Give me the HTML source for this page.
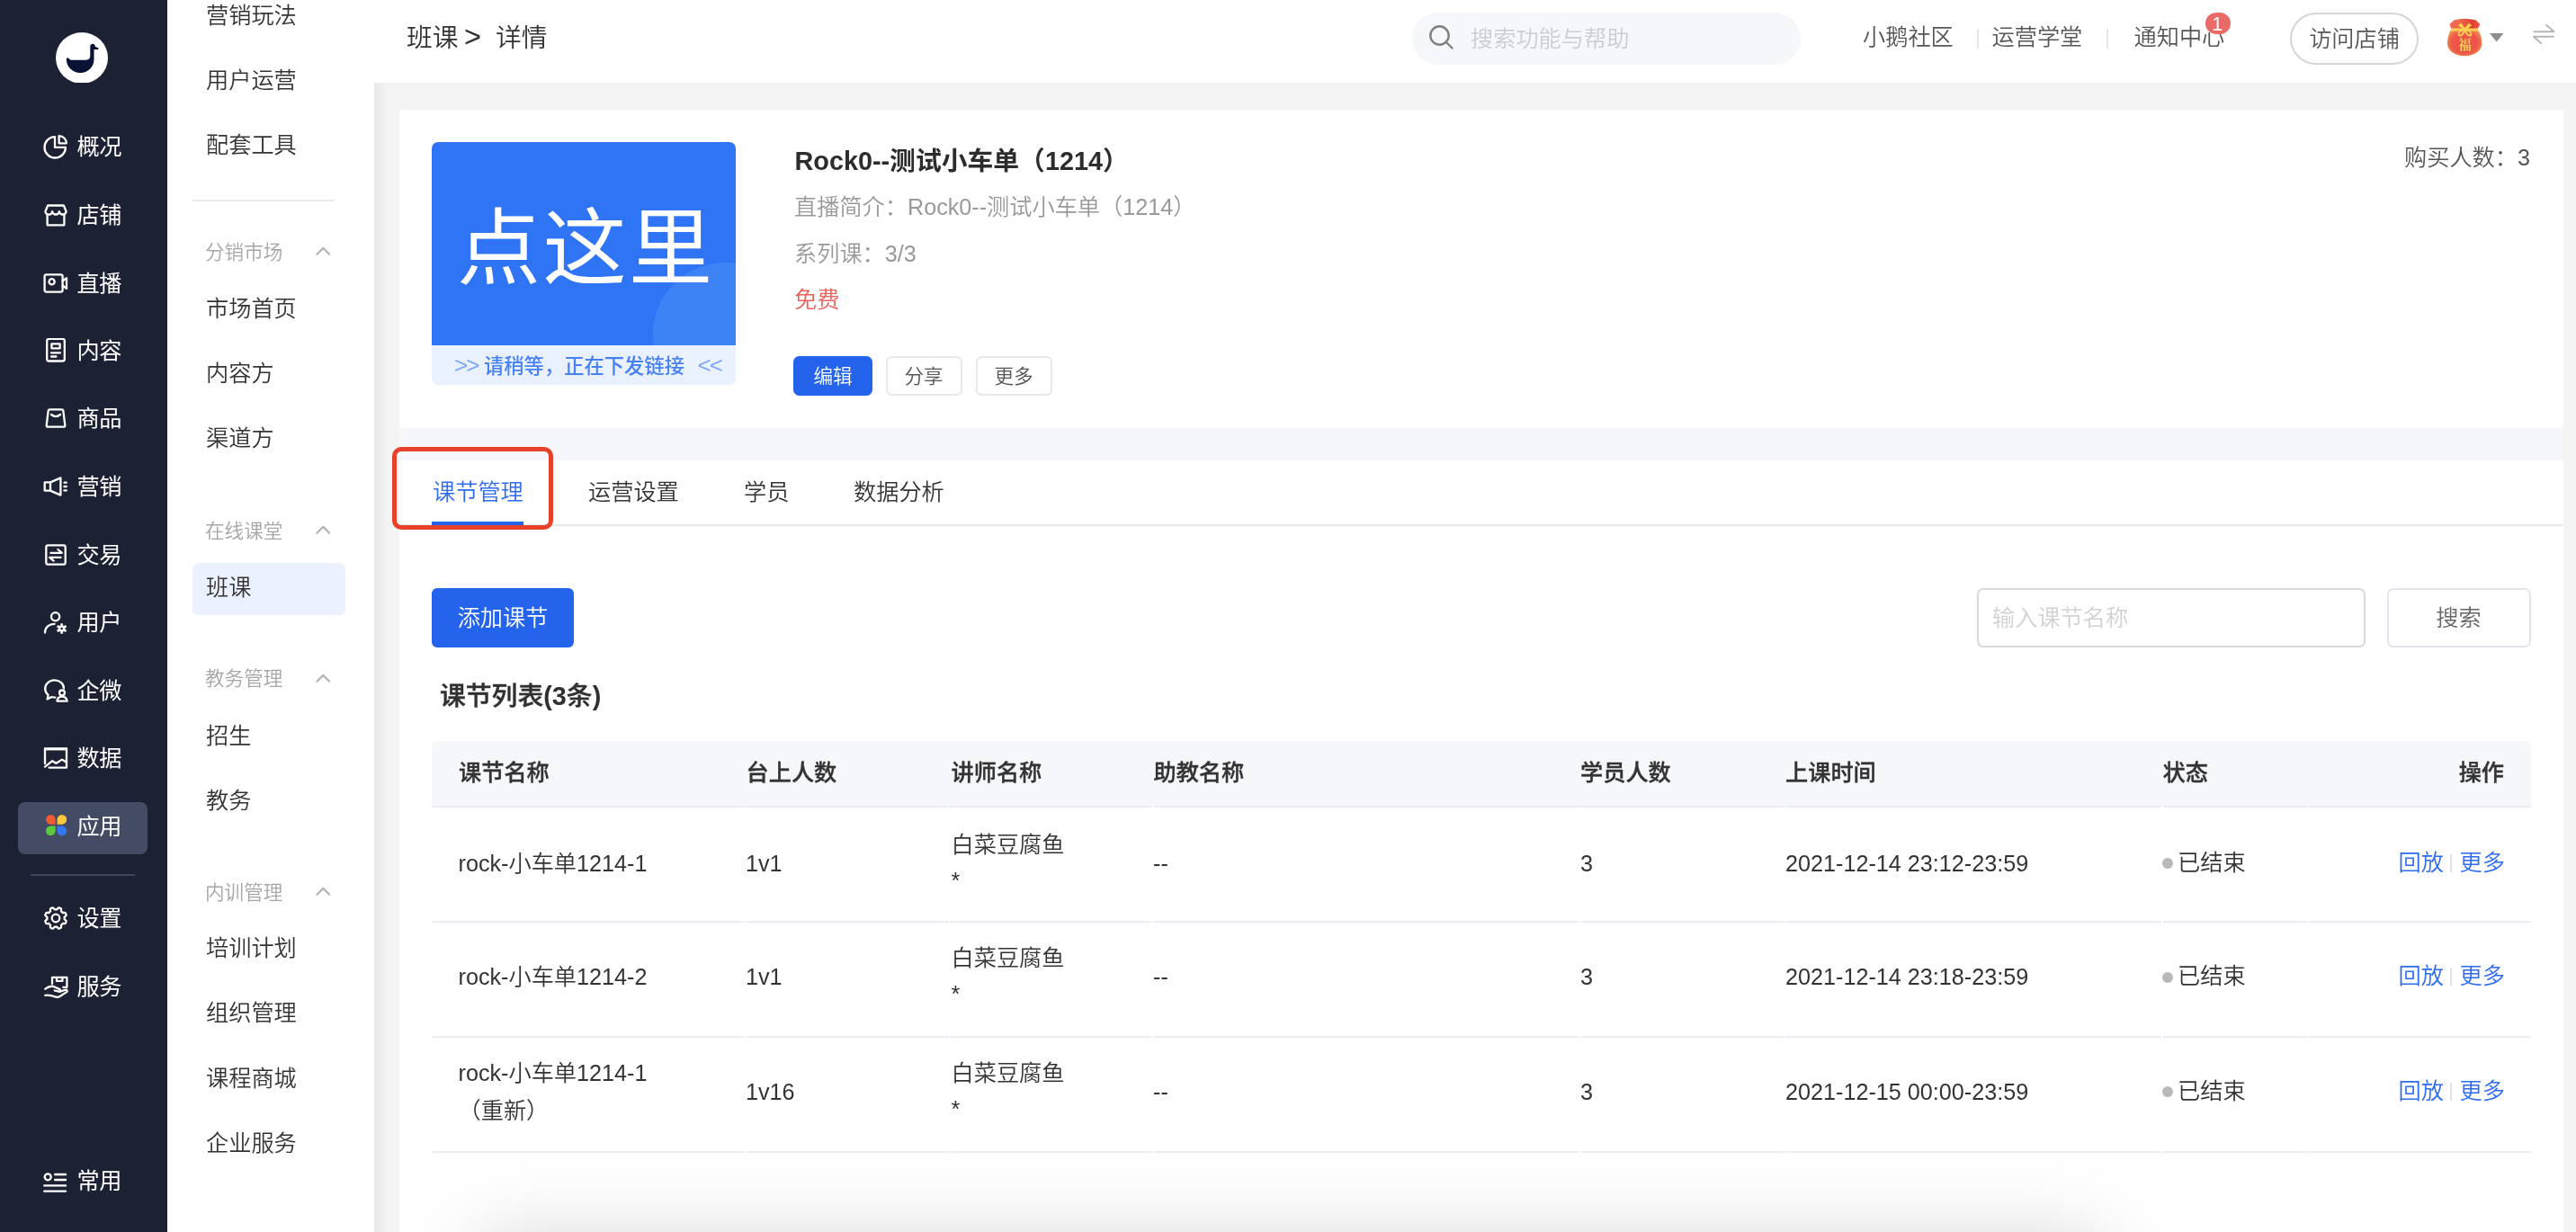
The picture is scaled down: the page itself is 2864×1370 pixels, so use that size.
<!DOCTYPE html>
<html lang="zh-CN">
<head>
<meta charset="utf-8">
<title>班课 - 详情</title>
<style>
*{box-sizing:border-box;margin:0;padding:0}
html,body{width:2864px;height:1370px;overflow:hidden;background:#f4f4f4}
body{position:relative;font-family:"Liberation Sans","Noto Sans CJK SC",sans-serif;font-size:25.2px;font-weight:350;color:#333;-webkit-font-smoothing:antialiased}
#nav,#sub,#hd,#main{will-change:transform}
.abs,.t{position:absolute;white-space:nowrap}
.t{height:40px;line-height:40px;margin-top:-20px}
/* left dark sidebar */
#nav{position:absolute;left:0;top:0;width:186px;height:1370px;background:#1c2133}
#nav .t{color:#fff;left:85.5px;font-size:25.2px;font-weight:400;letter-spacing:-0.4px}
#nav svg{position:absolute;left:48px;width:28px;height:28px;margin-top:-14px;fill:none;stroke:#fff;stroke-width:2.3;stroke-linecap:round;stroke-linejoin:round}
#nav .hl{position:absolute;left:20px;top:892px;width:144px;height:58px;border-radius:8px;background:#444b64}
#nav .dv{position:absolute;left:34px;top:971.5px;width:116px;height:2px;background:#3c4360}
/* second sidebar */
#sub{position:absolute;left:186px;top:0;width:230px;height:1370px;background:#fff}
#sub .t{left:43px;color:#333}
#sub .g{font-size:21.6px;color:#a6a6a6;margin-left:-1px;margin-top:-19px}
#sub .hl{position:absolute;left:28px;top:626px;width:170px;height:58px;border-radius:7px;background:#ebf1fe}
#sub .dv{position:absolute;left:28px;top:221.5px;width:158px;height:2px;background:#ebebeb}
#sub svg.ch{position:absolute;left:164.5px;width:16.6px;height:10.2px;margin-top:-5.6px;fill:none;stroke:#b4b4b4;stroke-width:2.4;stroke-linecap:round;stroke-linejoin:round}
/* header */
#hd{position:absolute;left:416px;top:0;width:2448px;height:92px;background:#fff}

#hd .t{color:#555}
#hd .bc{font-size:28.8px;color:#333;top:41.5px}
#hd .srch{position:absolute;left:1154px;top:14px;width:432px;height:58px;border-radius:29px;background:#f5f7fa}
#hd .sep{position:absolute;top:32px;width:2px;height:22px;background:#e6e6e6}
#hd .badge{position:absolute;left:2036px;top:13.8px;width:28px;height:24.4px;border-radius:12.2px;background:#e96a66;color:#fff;font-size:21.6px;font-weight:400;line-height:25px;text-align:center;text-indent:-1.5px}
#hd .visit{position:absolute;left:2130px;top:14px;width:143px;height:58px;border:2px solid #d6d6d6;border-radius:29px;text-align:center;line-height:54px;color:#555}
/* main */
#main{position:absolute;left:416px;top:92px;width:2448px;height:1278px;background:#f4f4f4;overflow:hidden}
#main .edge{position:absolute;left:0;top:0;width:16px;height:100%;background:linear-gradient(90deg,#e9e9e9,#f4f4f4)}
.card{position:absolute;background:#fff}

#c1{left:28px;top:30px;width:2406px;height:354px}
#c1 .thumb{position:absolute;left:36px;top:36px;width:338px;height:270px;border-radius:7px;overflow:hidden;background:#eaf1fe}
#c1 .thumb .blue{position:absolute;left:0;top:0;width:338px;height:225.8px;background:#3074f6;overflow:hidden}
#c1 .thumb .blue i{position:absolute;left:246px;top:134px;width:160px;height:160px;border-radius:50%;background:rgba(80,150,245,.45)}
#c1 .thumb .big{position:absolute;left:28px;top:119px;height:100px;line-height:100px;margin-top:-50px;font-size:93px;letter-spacing:2.5px;color:#fff;font-weight:400;white-space:nowrap}
#c1 .thumb .strip{position:absolute;left:0;top:226.5px;width:338px;height:43.5px;line-height:46px;font-size:22.3px;font-weight:500;color:#4682f6;white-space:nowrap}
#c1 .thumb .strip span{position:absolute;top:0}
.btn{position:absolute;height:44px;line-height:41.5px;border-radius:6.5px;text-align:center;font-size:21.6px;border:2px solid #e7e8ea;color:#555;background:#fff}
.btn.p{background:#2463ec;border-color:#2463ec;color:#fff}
#c2{left:28px;top:420px;width:2406px;height:900px}
#c2 .tab{font-size:25.2px;top:35px}
#tbl .th{position:absolute;top:0;height:73px;background:#f5f7fa}
#tbl .h{font-weight:500;-webkit-text-stroke:.35px #333;color:#333;top:34.8px}
#tbl .row{position:absolute;left:0;width:2333px;height:2px;background:#ebedf2;border-radius:1px}
#tbl .dot{position:absolute;left:1924px;width:12px;height:12px;border-radius:50%;background:#b9b9b9;margin-top:-5px}
#tbl .a{color:#2d6bf0}
#tbl .bar{position:absolute;left:2244px;width:1.5px;height:20px;margin-top:-10px;background:#dfe3ea}
#shadow{position:absolute;left:119px;top:1298px;width:1800px;height:200px;box-shadow:0 0 100px 0 rgba(0,0,0,.22)}
</style>
</head>
<body>
<div id="nav">
<svg style="left:62px;top:35.6px;width:58px;height:56.8px;margin:0;stroke:none" viewBox="0 0 58 58" preserveAspectRatio="none"><circle cx="29" cy="29" r="29" fill="#fff"/><path fill="#081235" transform="translate(0 .6)" d="M11.8 29.8c0-1.7 1.9-2.1 2.7-.9.8 1.3 2.2 1.9 3.7 1.9h15.6c2.8 0 4.5-1.7 4.5-4.5V15.2c0-3.4 4.5-3.8 5.3-.8.3 1.3 1.1 1.9 2.5 2 1.900.1 1.9 2.5 0 2.5h-3.6v11.3c0 8.4-6.9 15.1-15.4 15.1S11.8 38.5 11.8 29.8z"/></svg>
<div class="hl"></div><div class="dv"></div>
<svg style="top:163px" viewBox="0 0 28 28"><g transform="translate(0 .5)"><path d="M13 2.6A11.7 11.7 0 1 0 24.9 14.4H13z"/><path d="M17.6 1.6v8.2h8.2a8.2 8.2 0 0 0-8.2-8.2z"/></g></svg>
<div class="t" style="top:163px">概况</div>
<svg style="top:238.6px" viewBox="0 0 28 28"><g transform="translate(0 .5)"><path d="M2.4 9.6L5.2 3h17.6l2.8 6.6a3.87 3.6 0 0 1-7.73 0a3.87 3.6 0 0 1-7.73 0a3.87 3.6 0 0 1-7.74 0z"/><path d="M4.6 13v11.8h18.8V13"/></g></svg>
<div class="t" style="top:238.6px">店铺</div>
<svg style="top:314.6px" viewBox="0 0 28 28"><rect x="1.6" y="4.4" width="20" height="19.2" rx="2"/><circle cx="9.6" cy="12.2" r="3.1"/><path d="M21.6 11.5l4.4-3.4v11.8l-4.4-3.4"/></svg>
<div class="t" style="top:314.6px">直播</div>
<svg style="top:389.6px" viewBox="0 0 28 28"><g transform="translate(0 -.9)"><rect x="4.2" y="1.8" width="19.6" height="24.6" rx="2.2"/><rect x="9.4" y="7.2" width="9.2" height="5"/><path d="M9 17.2h10M9 21.4h5.4"/></g></svg>
<div class="t" style="top:389.6px">内容</div>
<svg style="top:465.2px" viewBox="0 0 28 28"><path d="M7.2 4.4h13.6q1.3 0 1.5 1.3l2 16.2q.2 1.8-1.6 1.8H5.3q-1.8 0-1.6-1.8l2-16.2q.2-1.3 1.5-1.3z"/><path d="M9 10q5 4.2 10 0"/></svg>
<div class="t" style="top:465.2px">商品</div>
<svg style="top:541px" viewBox="0 0 28 28"><path d="M1.7 9.4h6.3v9.2H1.7z"/><path d="M8 9.4l11.4-5v19.2l-11.4-5"/><path d="M23.4 9.6h2.4M23.4 14h2.4M23.4 18.4h2.4"/></svg>
<div class="t" style="top:541px">营销</div>
<svg style="top:617px" viewBox="0 0 28 28"><rect x="3.3" y="3.3" width="21.4" height="21.4" rx="2.2"/><path d="M8.4 11.8h12.4l-4.4-3.8M19.6 16.8H7.2l4.4 3.8"/></svg>
<div class="t" style="top:617px">交易</div>
<svg style="top:692.4px" viewBox="0 0 28 28"><circle cx="13.6" cy="7.8" r="4.6"/><path d="M2 25.6c0-6 4.6-9.8 10.6-9.8"/><g stroke-width="2.5" stroke-linecap="butt"><circle cx="20.6" cy="21" r="2.6"/><path d="M20.6 15.2v2.6M20.6 24.2v2.6M15.58 18.1l2.25 1.3M23.37 22.6l2.25 1.3M15.58 23.9l2.25-1.3M23.37 19.4l2.25-1.3"/></g></svg>
<div class="t" style="top:692.4px">用户</div>
<svg style="top:767.8px" viewBox="0 0 28 28"><path d="M13.4 21.6c-1.4 0-2.6-.2-3.8-.6l-5 2.4 1-4.6C3.4 17 2.2 14.6 2.2 12c0-5.4 4.6-9.6 10.4-9.6 5.6 0 10.2 3.9 10.4 9"/><circle cx="21" cy="16.4" r="2.9"/><path d="M15.4 25.6c.4-3.2 2.6-5 5.6-5s5.2 1.8 5.6 5z"/></svg>
<div class="t" style="top:767.8px">企微</div>
<svg style="top:843.2px" viewBox="0 0 28 28"><path d="M2 20.2V4.6M26 4.6v20H6.6"/><path d="M.9 3.8h26.2" stroke-width="3.2" stroke-linecap="butt"/><path d="M2 23.6l8.2-6.4 4.2 2.6 6.6-4.2 5 3.2"/></svg>
<div class="t" style="top:843.2px">数据</div>
<svg style="top:918.8px;left:50.6px;width:23.2px;height:23.2px;margin-top:-12.6px;stroke:none" viewBox="0 0 24 24"><path fill="#ee5a33" d="M5.5 0A5.5 5.5 0 1 0 5.5 11H11V5.5A5.5 5.5 0 0 0 5.5 0z"/><path fill="#fbc93b" d="M18.5 0A5.5 5.5 0 1 1 18.5 11H13V5.5A5.5 5.5 0 0 1 18.5 0z"/><path fill="#5bc93d" d="M5.5 24A5.5 5.5 0 1 1 5.5 13H11V18.5A5.5 5.5 0 0 1 5.5 24z"/><path fill="#3478f6" d="M18.5 24A5.5 5.5 0 1 0 18.5 13H13V18.5A5.5 5.5 0 0 0 18.5 24z"/></svg>
<div class="t" style="top:918.8px">应用</div>
<svg style="top:1020.8px" viewBox="0 0 28 28"><circle cx="14" cy="14" r="4.3"/><path d="M14 4.35L14.38 4.36L14.76 4.38L15.13 4.42L15.6 3.88L16.13 3.31L16.7 2.76L17.3 2.31L17.75 2.44L18.21 2.6L18.65 2.77L19.09 2.97L19.52 3.17L19.94 3.4L20.04 4.15L20.06 4.94L20.02 5.71L19.97 6.42L20.27 6.66L20.55 6.91L20.82 7.18L21.09 7.45L21.34 7.73L21.58 8.03L22.29 7.98L23.06 7.94L23.85 7.96L24.6 8.06L24.83 8.48L25.03 8.91L25.23 9.35L25.4 9.79L25.56 10.25L25.69 10.7L25.24 11.3L24.69 11.87L24.12 12.4L23.58 12.87L23.62 13.24L23.64 13.62L23.65 14L23.64 14.38L23.62 14.76L23.58 15.13L24.12 15.6L24.69 16.13L25.24 16.7L25.69 17.3L25.56 17.75L25.4 18.21L25.23 18.65L25.03 19.09L24.83 19.52L24.6 19.94L23.85 20.04L23.06 20.06L22.29 20.02L21.58 19.97L21.34 20.27L21.09 20.55L20.82 20.82L20.55 21.09L20.27 21.34L19.97 21.58L20.02 22.29L20.06 23.06L20.04 23.85L19.94 24.6L19.52 24.83L19.09 25.03L18.65 25.23L18.21 25.4L17.75 25.56L17.3 25.69L16.7 25.24L16.13 24.69L15.6 24.12L15.13 23.58L14.76 23.62L14.38 23.64L14 23.65L13.62 23.64L13.24 23.62L12.87 23.58L12.4 24.12L11.87 24.69L11.3 25.24L10.7 25.69L10.25 25.56L9.79 25.4L9.35 25.23L8.91 25.03L8.48 24.83L8.06 24.6L7.96 23.85L7.94 23.06L7.98 22.29L8.03 21.58L7.73 21.34L7.45 21.09L7.18 20.82L6.91 20.55L6.66 20.27L6.42 19.97L5.71 20.02L4.94 20.06L4.15 20.04L3.4 19.94L3.17 19.52L2.97 19.09L2.77 18.65L2.6 18.21L2.44 17.75L2.31 17.3L2.76 16.7L3.31 16.13L3.88 15.6L4.42 15.13L4.38 14.76L4.36 14.38L4.35 14L4.36 13.62L4.38 13.24L4.42 12.87L3.88 12.4L3.31 11.87L2.76 11.3L2.31 10.7L2.44 10.25L2.6 9.79L2.77 9.35L2.97 8.91L3.17 8.48L3.4 8.06L4.15 7.96L4.94 7.94L5.71 7.98L6.42 8.03L6.66 7.73L6.91 7.45L7.18 7.18L7.45 6.91L7.73 6.66L8.03 6.42L7.98 5.71L7.94 4.94L7.96 4.15L8.06 3.4L8.48 3.17L8.91 2.97L9.35 2.77L9.79 2.6L10.25 2.44L10.7 2.31L11.3 2.76L11.87 3.31L12.4 3.88L12.87 4.42L13.24 4.38L13.62 4.36z"/></svg>
<div class="t" style="top:1020.8px">设置</div>
<svg style="top:1096.8px" viewBox="0 0 28 28"><g transform="translate(.8 1.5)"><path d="M9.2 9.5V2.3h16.4v11h-4.2"/><path d="M14.2 2.6v3.8h6.4V2.6"/><path d="M1.5 15.2c3.4-2.6 7.4-3.6 10.4-2.2l5.6 2.6c1.600.8.8 3-1 2.6l-4.6-1.2"/><path d="M1.5 22.4c4.2-.6 7.400.2 10.4 1.4 2 .8 4.200.6 6.2-.6l7.6-4.8c.6-1.8-.8-2.6-2.4-2l-4.8 1.6"/></g></svg>
<div class="t" style="top:1096.8px">服务</div>
<svg style="top:1313.2px" viewBox="0 0 28 28"><g transform="translate(0 1.2)"><circle cx="5.2" cy="8.6" r="3.5"/><path d="M13.2 5.8h11.8M13.2 11.8h11.8M1.3 18.2h23.7M1.3 24.4h23.7" stroke-width="2.4"/></g></svg>
<div class="t" style="top:1313.2px">常用</div>
</div>
<div id="sub">
<div class="hl"></div><div class="dv"></div>
<div class="t" style="top:16.7px">营销玩法</div>
<div class="t" style="top:88.7px">用户运营</div>
<div class="t" style="top:160.7px">配套工具</div>
<div class="t g" style="top:280px">分销市场</div><svg class="ch" style="top:280px" viewBox="0 0 18 11"><path d="M1.5 9.5L9 2l7.5 7.5"/></svg>
<div class="t" style="top:342.9px">市场首页</div>
<div class="t" style="top:415px">内容方</div>
<div class="t" style="top:486.8px">渠道方</div>
<div class="t g" style="top:589.7px">在线课堂</div><svg class="ch" style="top:589.7px" viewBox="0 0 18 11"><path d="M1.5 9.5L9 2l7.5 7.5"/></svg>
<div class="t" style="top:652.8px">班课</div>
<div class="t g" style="top:754.3px">教务管理</div><svg class="ch" style="top:754.3px" viewBox="0 0 18 11"><path d="M1.5 9.5L9 2l7.5 7.5"/></svg>
<div class="t" style="top:818.4px">招生</div>
<div class="t" style="top:890.2px">教务</div>
<div class="t g" style="top:992px">内训管理</div><svg class="ch" style="top:992px" viewBox="0 0 18 11"><path d="M1.5 9.5L9 2l7.5 7.5"/></svg>
<div class="t" style="top:1053.6px">培训计划</div>
<div class="t" style="top:1126.3px">组织管理</div>
<div class="t" style="top:1198.5px">课程商城</div>
<div class="t" style="top:1270.6px">企业服务</div>
</div>
<div id="hd">
<div class="t bc" style="left:36px">班课</div><div class="t bc" style="left:100px;font-size:32.5px;top:40.5px">&gt;</div><div class="t bc" style="left:135px">详情</div>
<div class="srch"></div>
<svg class="abs" style="left:1171px;top:26px;width:32px;height:32px" viewBox="0 0 32 32" fill="none" stroke="#808080" stroke-width="2.4" stroke-linecap="round"><circle cx="13.5" cy="13.5" r="10.2"/><path d="M21 21l6.5 6.5"/></svg>
<div class="t" style="left:1219px;top:42.5px;color:#cbcdd1">搜索功能与帮助</div>
<div class="t" style="left:1655px;top:41px">小鹅社区</div>
<div class="sep" style="left:1782px"></div>
<div class="t" style="left:1798.5px;top:41px">运营学堂</div>
<div class="sep" style="left:1926px"></div>
<div class="t" style="left:1956.5px;top:41px">通知中心</div>
<div class="badge">1</div>
<div class="visit">访问店铺</div>
<svg class="abs" style="left:2304.5px;top:20.4px;width:39px;height:43px;overflow:visible" viewBox="0 0 39 43"><defs><radialGradient id="bg1" cx="0.5" cy="0.52" r="0.62"><stop offset="0" stop-color="#ea4f47"/><stop offset="0.62" stop-color="#ec5849"/><stop offset="1" stop-color="#f6a552"/></radialGradient><linearGradient id="bg2" x1="0" y1="0" x2="1" y2="0"><stop offset="0" stop-color="#f0645a"/><stop offset="0.3" stop-color="#ee6a4c"/><stop offset="0.75" stop-color="#e03f2e"/><stop offset="1" stop-color="#ec5a45"/></linearGradient></defs><path fill="url(#bg1)" d="M4.5 12C1.5 17-.3 23 0 29c.3 7 7.5 13.2 19.2 13.2S38 36 38.3 29c.3-6-1.3-12-5.2-17z"/><path fill="url(#bg2)" d="M2.6 6.8L7.8 2.3Q19.5-.9 31.2 2.3L36.4 6.8Q35.2 10 33.1 12.3H4.5Q3.2 10 2.6 6.8z"/><path fill="#fbd351" d="M4.3 11.5h29l.6 1.5-.6 1.5h-29l-.6-1.5z"/><g fill="none" stroke="#fbd351" stroke-width="1.9" stroke-linecap="round"><path d="M19.5 12.5L13.2 8M19.5 12.5L25.8 8M19.5 12.5L15 6.8M19.5 12.5L24 6.8"/><path d="M19.5 12.8c-3 .5-7 2.5-7 5 0 1.8 2 2.3 3.5 1.2 1.8-1.3 3-4 3.5-6.2zM19.5 12.8c3 .5 7 2.5 7 5 0 1.8-2 2.3-3.5 1.2-1.8-1.3-3-4-3.5-6.2z"/></g><text x="19.6" y="35.3" font-size="14.5" text-anchor="middle" fill="#fbd55a" font-family="'Noto Serif CJK SC','Noto Sans CJK SC',serif" font-weight="700">福</text></svg>
<svg class="abs" style="left:2351.7px;top:36.8px;width:15.4px;height:9.6px" viewBox="0 0 16 10"><path fill="#8e8e8e" d="M0 0h16L8 10z"/></svg>
<svg class="abs" style="left:2400px;top:26px;width:25px;height:24px" viewBox="0 0 25 24" fill="none" stroke="#b6b6b6" stroke-width="1.9" stroke-linejoin="round"><path d="M.6 9.2h23l-9.3-7.9M23.6 14.7H.9l8.9 7.9"/></svg>
</div>
<div id="main"><div class="edge"></div>
<div class="card" id="c1">
<div class="thumb"><div class="blue"><i></i><div class="big">点这里</div></div><div class="strip"><span style="left:25px;top:-1.5px;font-size:26px;font-weight:400;color:#7fa9f8;letter-spacing:-2px">&gt;&gt;</span><span style="left:58px">请稍等，正在下发链接</span><span style="left:295.5px;top:-1.5px;font-size:26px;font-weight:400;color:#7fa9f8;letter-spacing:-2px">&lt;&lt;</span></div></div>
<div class="t" style="left:439.5px;top:56.5px;font-size:28.8px;font-weight:700;color:#2c2c2c">Rock0--测试小车单（1214）</div>
<div class="t" style="left:439px;top:107.5px;color:#999">直播简介：Rock0--测试小车单（1214）</div>
<div class="t" style="left:439px;top:159.5px;color:#999">系列课：3/3</div>
<div class="t" style="left:439px;top:210.5px;color:#ee5f59">免费</div>
<div class="btn p" style="left:438px;top:274px;width:88px">编辑</div>
<div class="btn" style="left:540.5px;top:274px;width:85px">分享</div>
<div class="btn" style="left:640.5px;top:274px;width:85px">更多</div>
<div class="t" style="right:37px;top:53px;color:#555">购买人数：3</div>
</div>
<div class="abs" style="left:28px;top:384px;width:2406px;height:36px;background:#f5f7fa"></div>
<div class="card" id="c2">
<div class="abs" style="left:0;top:70.5px;width:2406px;height:2px;background:#e6e8ee"></div>
<div class="t tab" style="left:37px;color:#2d6bf0">课节管理</div>
<div class="abs" style="left:36px;top:68px;width:102px;height:4px;background:#2463ec"></div>
<div class="t tab" style="left:210px">运营设置</div>
<div class="t tab" style="left:383px">学员</div>
<div class="t tab" style="left:505px">数据分析</div>
<div class="btn p" style="left:36px;top:142px;width:158px;height:66px;line-height:62px;font-size:25.2px;border-radius:6px">添加课节</div>
<div class="abs" style="left:1754px;top:141.5px;width:432px;height:66.5px;border:2px solid #d9d9d9;border-radius:7px;background:#fff"></div>
<div class="t" style="left:1771px;top:175px;color:#d0d1d3">输入课节名称</div>
<div class="btn" style="left:2209.5px;top:141.5px;width:160px;height:66.5px;line-height:63px;font-size:25.2px;border-radius:7px;color:#666;border-color:#e3e5ec">搜索</div>
<div class="t" style="left:45px;top:262px;font-size:28.8px;font-weight:500;-webkit-text-stroke:.4px #303030;color:#303030">课节列表<b style="font-weight:700;-webkit-text-stroke:0">(3</b>条<b style="font-weight:700;-webkit-text-stroke:0">)</b></div>
<div id="tbl" class="abs" style="left:36px;top:312px;width:2333px;height:470px">
<div class="th" style="left:0;width:2334px;border-radius:6px 6px 0 0"></div>
<div class="row" style="left:0px;width:346.5px;top:72px"></div>
<div class="row" style="left:348px;width:226.5px;top:72px"></div>
<div class="row" style="left:576px;width:224px;top:72px"></div>
<div class="row" style="left:801.5px;width:474px;top:72px"></div>
<div class="row" style="left:1277px;width:226.5px;top:72px"></div>
<div class="row" style="left:1505px;width:418px;top:72px"></div>
<div class="row" style="left:1924.5px;width:161px;top:72px"></div>
<div class="row" style="left:2087px;width:247px;top:72px"></div>
<div class="t h" style="left:30px">课节名称</div>
<div class="t h" style="left:349.5px">台上人数</div>
<div class="t h" style="left:577.5px">讲师名称</div>
<div class="t h" style="left:802.5px">助教名称</div>
<div class="t h" style="left:1277px">学员人数</div>
<div class="t h" style="left:1505px">上课时间</div>
<div class="t h" style="left:1924.5px">状态</div>
<div class="t h" style="right:29px">操作</div>
<div class="row" style="left:0px;width:346.5px;top:200px"></div>
<div class="row" style="left:348px;width:226.5px;top:200px"></div>
<div class="row" style="left:576px;width:224px;top:200px"></div>
<div class="row" style="left:801.5px;width:474px;top:200px"></div>
<div class="row" style="left:1277px;width:226.5px;top:200px"></div>
<div class="row" style="left:1505px;width:418px;top:200px"></div>
<div class="row" style="left:1924.5px;width:161px;top:200px"></div>
<div class="row" style="left:2087px;width:247px;top:200px"></div>
<div class="t" style="left:29.5px;top:135.5px">rock-小车单1214-1</div>
<div class="t" style="left:349px;top:135.5px">1v1</div>
<div class="t" style="left:577.5px;top:114.5px">白菜豆腐鱼</div><div class="t" style="left:577.5px;top:154.5px">*</div>
<div class="t" style="left:802px;top:135.5px">--</div>
<div class="t" style="left:1277px;top:135.5px">3</div>
<div class="t" style="left:1505px;top:135.5px">2021-12-14 23:12-23:59</div>
<div class="dot" style="top:134.8px"></div><div class="t" style="left:1941px;top:134.5px">已结束</div>
<div class="t a" style="left:2186.5px;top:134.5px">回放</div><div class="bar" style="top:135.5px"></div><div class="t a" style="left:2254.5px;top:134.5px">更多</div>
<div class="row" style="left:0px;width:346.5px;top:328px"></div>
<div class="row" style="left:348px;width:226.5px;top:328px"></div>
<div class="row" style="left:576px;width:224px;top:328px"></div>
<div class="row" style="left:801.5px;width:474px;top:328px"></div>
<div class="row" style="left:1277px;width:226.5px;top:328px"></div>
<div class="row" style="left:1505px;width:418px;top:328px"></div>
<div class="row" style="left:1924.5px;width:161px;top:328px"></div>
<div class="row" style="left:2087px;width:247px;top:328px"></div>
<div class="t" style="left:29.5px;top:262.3px">rock-小车单1214-2</div>
<div class="t" style="left:349px;top:262.3px">1v1</div>
<div class="t" style="left:577.5px;top:241.3px">白菜豆腐鱼</div><div class="t" style="left:577.5px;top:281.3px">*</div>
<div class="t" style="left:802px;top:262.3px">--</div>
<div class="t" style="left:1277px;top:262.3px">3</div>
<div class="t" style="left:1505px;top:262.3px">2021-12-14 23:18-23:59</div>
<div class="dot" style="top:261.6px"></div><div class="t" style="left:1941px;top:261.3px">已结束</div>
<div class="t a" style="left:2186.5px;top:261.3px">回放</div><div class="bar" style="top:262.3px"></div><div class="t a" style="left:2254.5px;top:261.3px">更多</div>
<div class="row" style="left:0px;width:346.5px;top:456px"></div>
<div class="row" style="left:348px;width:226.5px;top:456px"></div>
<div class="row" style="left:576px;width:224px;top:456px"></div>
<div class="row" style="left:801.5px;width:474px;top:456px"></div>
<div class="row" style="left:1277px;width:226.5px;top:456px"></div>
<div class="row" style="left:1505px;width:418px;top:456px"></div>
<div class="row" style="left:1924.5px;width:161px;top:456px"></div>
<div class="row" style="left:2087px;width:247px;top:456px"></div>
<div class="t" style="left:29.5px;top:369px">rock-小车单1214-1</div><div class="t" style="left:29.5px;top:411px">（重新）</div>
<div class="t" style="left:349px;top:390px">1v16</div>
<div class="t" style="left:577.5px;top:369px">白菜豆腐鱼</div><div class="t" style="left:577.5px;top:409px">*</div>
<div class="t" style="left:802px;top:390px">--</div>
<div class="t" style="left:1277px;top:390px">3</div>
<div class="t" style="left:1505px;top:390px">2021-12-15 00:00-23:59</div>
<div class="dot" style="top:389.3px"></div><div class="t" style="left:1941px;top:389px">已结束</div>
<div class="t a" style="left:2186.5px;top:389px">回放</div><div class="bar" style="top:390px"></div><div class="t a" style="left:2254.5px;top:389px">更多</div>
</div>
</div>
<div id="shadow"></div>
<div class="abs" style="left:20px;top:405px;width:178.5px;height:91.5px;border:5.5px solid #e8412a;border-radius:10px"></div>
</div>
</body>
</html>
